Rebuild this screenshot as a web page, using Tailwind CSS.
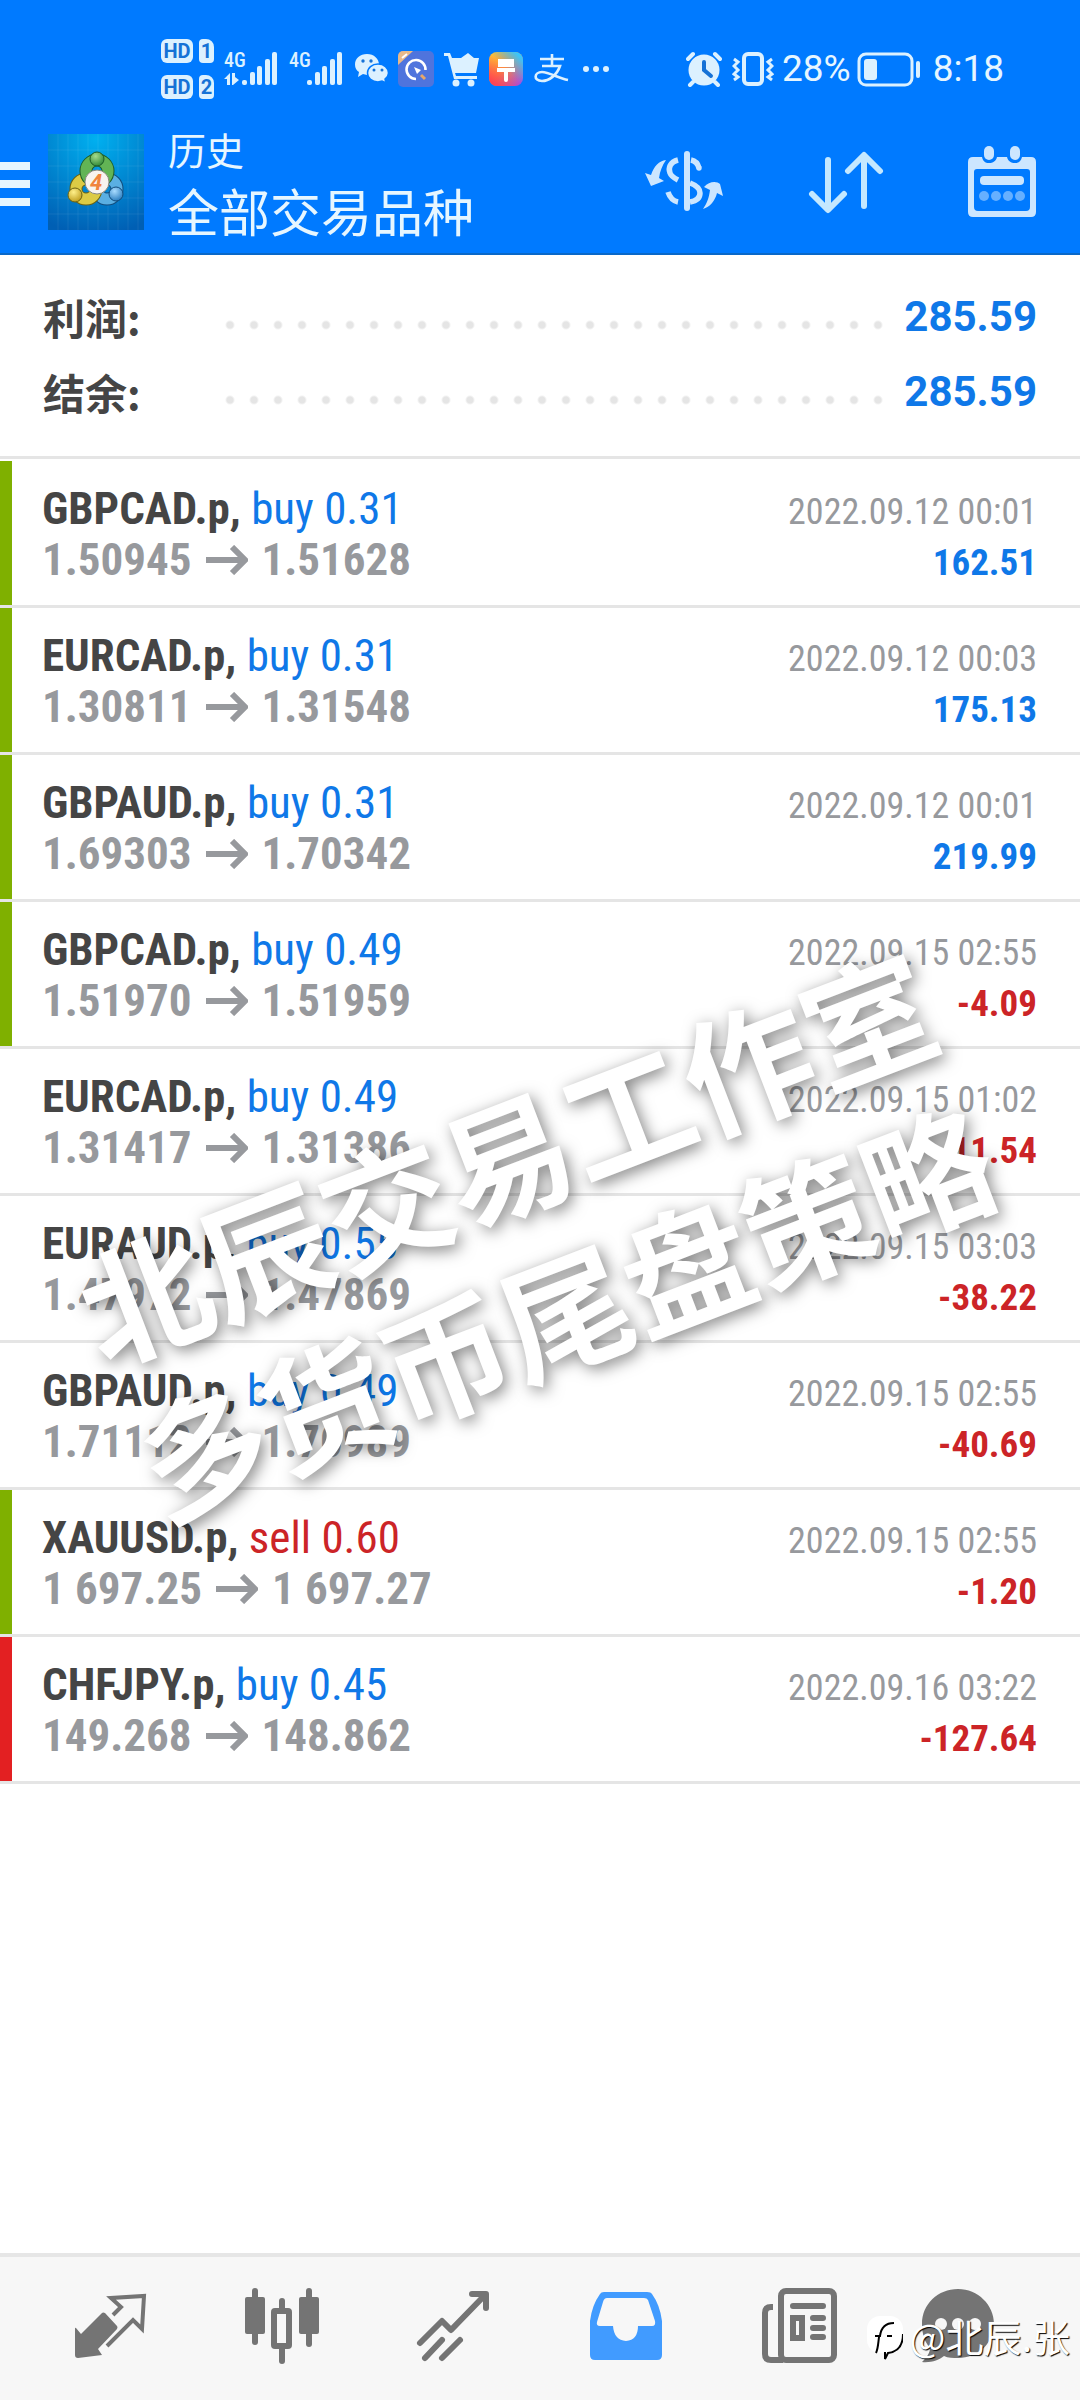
<!DOCTYPE html>
<html lang="zh-CN">
<head>
<meta charset="utf-8">
<meta name="viewport" content="width=device-width, initial-scale=1">
<title>历史</title>
<script src="https://cdn.jsdelivr.net/npm/@tailwindcss/browser@4"></script>
</head>
<body class="bg-white">
<div class="relative flex min-h-screen flex-col overflow-hidden font-['Roboto_Condensed','Roboto','Noto_Sans_CJK_SC',sans-serif] text-[#454545]">

  <header class="border-b-2 border-[#0a68c8] bg-[#007aff] text-[#e6f6ff]">
    <!-- Status bar -->
    <div class="flex h-[110px] items-center pt-[27px] pr-[76px] pl-[161px] font-['Roboto','Noto_Sans_CJK_SC',sans-serif]">
      <div class="flex flex-col gap-3">
        <div class="flex items-center gap-1.5 text-xl leading-6 font-bold text-[#1672d6]">
          <span class="w-8 rounded-md bg-[#dcf1ff] text-center">HD</span>
          <span class="w-[15px] rounded-sm rounded-tr-lg bg-[#dcf1ff] text-center">1</span>
        </div>
        <div class="flex items-center gap-1.5 text-xl leading-6 font-bold text-[#1672d6]">
          <span class="w-8 rounded-md bg-[#dcf1ff] text-center">HD</span>
          <span class="w-[15px] rounded-sm rounded-tr-lg bg-[#dcf1ff] text-center">2</span>
        </div>
      </div>
      <svg class="ml-2.5 h-9 w-[54px]" viewBox="0 0 54 36" fill="#dcf1ff" role="img" aria-label="4G">
        <text x="0" y="16" font-family="Roboto Condensed" font-weight="500" font-size="20">4G</text>
        <path d="M0 28l6-6v12H3v-6zM8 22h3v4l4 3-6 5H8z"/>
        <rect x="18" y="29" width="5" height="5" rx="2"/><rect x="26" y="21" width="5" height="13" rx="2"/><rect x="33" y="15" width="5" height="19" rx="2"/><rect x="41" y="8" width="5" height="26" rx="2"/><rect x="48" y="1" width="5" height="33" rx="2"/>
      </svg>
      <svg class="ml-2.5 h-9 w-[56px]" viewBox="0 0 56 36" fill="#dcf1ff" role="img" aria-label="4G">
        <text x="1" y="16" font-family="Roboto Condensed" font-weight="500" font-size="20">4G</text>
        <rect x="19" y="29" width="5" height="5" rx="2"/><rect x="27" y="21" width="5" height="13" rx="2"/><rect x="34" y="15" width="5" height="19" rx="2"/><rect x="42" y="8" width="5" height="26" rx="2"/><rect x="49" y="1" width="5" height="33" rx="2"/>
      </svg>
      <svg class="ml-2.5 h-9 w-9" viewBox="0 0 36 36" role="img" aria-label="微信">
        <path d="M13 3C6 3 1 7.500 1 13.500c0 3.500 1.500 6 4 7.500l-1 5 5-3 4 1c7 0 12-5 12-10.500S20 3 13 3z" fill="#dcf1ff"/>
        <path d="M24 13c-6 0-10.500 4-10.500 9S18 31 24 31l4-1 4 2-1-4c2-1.500 3.500-3.500 3.500-6 0-5-4.500-9-10.500-9z" fill="#dcf1ff" stroke="#007aff" stroke-width="1.500"/>
        <circle cx="9" cy="10" r="1.700" fill="#1672d6"/><circle cx="17" cy="10" r="1.700" fill="#1672d6"/><circle cx="20" cy="19" r="1.500" fill="#1672d6"/><circle cx="28" cy="19" r="1.500" fill="#1672d6"/>
      </svg>
      <svg class="ml-2 h-9 w-9" viewBox="0 0 36 36" aria-hidden="true">
        <rect width="36" height="36" rx="5" fill="#4f74dd"/><path d="M0 14V5a5 5 0 015-5h10z" fill="#e7b98a"/><path d="M4 7l5-4" stroke="#fff" stroke-width="2"/>
        <path d="M18 28a9.500 9.500 0 119.500-9" fill="none" stroke="#fff" stroke-width="2.600"/><path d="M16 16l7 3-4 4z" fill="#fff"/><path d="M23 24l4 4" stroke="#e7a76a" stroke-width="3"/>
      </svg>
      <svg class="ml-2.5 h-9 w-9" viewBox="0 0 36 36" fill="#dcf1ff" aria-hidden="true">
        <path d="M0 2h6l2 5h27l-3 15H11l1 3h21v3H10L4 5H0zM17 7l7-5 6 5z"/><circle cx="12" cy="32" r="3.500"/><circle cx="27" cy="32" r="3.500"/>
      </svg>
      <svg class="ml-2 h-9 w-9" viewBox="0 0 36 36" aria-hidden="true">
        <defs>
          <linearGradient id="brushA" x1="0" y1="0" x2="1" y2="1"><stop offset="0" stop-color="#ffc934"/><stop offset=".45" stop-color="#ff8a3c"/><stop offset="1" stop-color="#9a45f5"/></linearGradient>
          <linearGradient id="brushB" x1="0" y1="1" x2="1" y2="0"><stop offset=".5" stop-color="#29c5ff" stop-opacity="0"/><stop offset=".9" stop-color="#35c8ff"/></linearGradient>
          <linearGradient id="brushC" x1="0" y1="1" x2="1" y2="0"><stop offset="0" stop-color="#ff3355"/><stop offset=".5" stop-color="#ff3355" stop-opacity="0"/></linearGradient>
        </defs>
        <rect x="1" y="1" width="34" height="34" rx="8" fill="url(#brushA)"/><rect x="1" y="1" width="34" height="34" rx="8" fill="url(#brushB)"/><rect x="1" y="1" width="34" height="34" rx="8" fill="url(#brushC)"/>
        <path d="M10 8h16v8H10zM9 17h18v4h-7v8a2 2 0 01-4 0v-8H9z" fill="#fff"/>
      </svg>
      <svg class="ml-2.5 h-9 w-9" viewBox="0 0 36 36" fill="none" stroke="#dcf1ff" stroke-width="2.600" aria-label="支付宝" role="img">
        <path d="M6 8h24M18 3v11M8 15h18c-3 9-11 15-18 15-9 0-8-9 0-9 7 0 16 6 26 8"/>
      </svg>
      <svg class="ml-3 h-9 w-7" viewBox="0 0 28 36" fill="#dcf1ff" aria-hidden="true"><circle cx="4" cy="18" r="3"/><circle cx="14" cy="18" r="3"/><circle cx="24" cy="18" r="3"/></svg>

      <div class="ml-auto flex items-center text-[37px] leading-9">
        <svg class="h-9 w-9" viewBox="0 0 36 36" aria-hidden="true">
          <circle cx="18" cy="19" r="15.500" fill="#dcf1ff"/><path d="M2 8l5-5M29 3l5 5M7 31l-3 3M29 31l3 3" stroke="#dcf1ff" stroke-width="4" stroke-linecap="round"/><path d="M18 11v8l7 6" fill="none" stroke="#1672d6" stroke-width="4" stroke-linecap="round"/>
        </svg>
        <svg class="ml-2.5 h-9 w-[42px]" viewBox="0 0 42 36" fill="none" stroke="#dcf1ff" aria-hidden="true">
          <rect x="12" y="3" width="18" height="30" rx="4" stroke-width="4"/><path d="M2 8l4 3-4 4 4 4-4 4 4 3-4 3M40 8l-4 3 4 4-4 4 4 4-4 3 4 3" stroke-width="3"/>
        </svg>
        <span class="ml-2">28%</span>
        <svg class="ml-1.5 h-9 w-16" viewBox="0 0 64 36" aria-hidden="true">
          <rect x="2" y="3" width="53" height="31" rx="7" fill="none" stroke="#dcf1ff" stroke-width="3"/><rect x="7" y="8" width="13" height="21" rx="3" fill="#dcf1ff"/><rect x="59" y="10" width="4" height="17" rx="2" fill="#dcf1ff"/>
        </svg>
        <span class="ml-3">8:18</span>
      </div>
    </div>

    <!-- Toolbar -->
    <div class="flex h-[143px] items-center pr-11">
      <button type="button" aria-label="菜单" class="flex w-[30px] flex-col gap-2.5 pt-1">
        <span class="h-2 bg-[#e6f6ff]"></span><span class="h-2 bg-[#e6f6ff]"></span><span class="h-2 bg-[#e6f6ff]"></span>
      </button>
      <svg class="ml-[18px] h-24 w-24" viewBox="0 0 96 96" role="img" aria-label="MetaTrader 4">
        <defs>
          <radialGradient id="logoBg" cx=".5" cy=".05" r="1"><stop offset="0" stop-color="#00b0f0"/><stop offset=".55" stop-color="#0084cf"/><stop offset="1" stop-color="#005fb4"/></radialGradient>
          <radialGradient id="green" cx=".4" cy=".3" r=".8"><stop offset="0" stop-color="#a5dc8c"/><stop offset="1" stop-color="#23802e"/></radialGradient>
          <radialGradient id="gold" cx=".4" cy=".3" r=".8"><stop offset="0" stop-color="#fff08a"/><stop offset="1" stop-color="#b89410"/></radialGradient>
          <radialGradient id="sky" cx=".4" cy=".3" r=".8"><stop offset="0" stop-color="#a9dcff"/><stop offset="1" stop-color="#1b72b8"/></radialGradient>
        </defs>
        <rect width="96" height="96" fill="url(#logoBg)"/>
        <path d="M10 0v96M20 0v96M30 0v96M40 0v96M50 0v96M60 0v96M70 0v96M80 0v96M90 0v96M0 16h96M0 32h96M0 48h96M0 64h96M0 80h96" stroke="#fff" stroke-opacity=".07"/>
        <circle cx="59" cy="55" r="10" fill="none" stroke="#124c7c" stroke-width="13"/><circle cx="59" cy="55" r="10" fill="none" stroke="#5aafe2" stroke-width="11"/>
        <circle cx="38" cy="55" r="10" fill="none" stroke="#6b6212" stroke-width="13"/><circle cx="38" cy="55" r="10" fill="none" stroke="#dccb45" stroke-width="11"/>
        <circle cx="49" cy="37" r="11" fill="none" stroke="#1d5c28" stroke-width="13"/><circle cx="49" cy="37" r="11" fill="none" stroke="#62b455" stroke-width="11"/>
        <circle cx="49" cy="25" r="7" fill="url(#green)" stroke="#1d5c28"/><circle cx="27" cy="61" r="7" fill="url(#gold)" stroke="#6b6212"/><circle cx="68" cy="60" r="7" fill="url(#sky)" stroke="#124c7c"/>
        <circle cx="49" cy="48" r="12" fill="#f8f4ef" stroke="#8a8a80"/>
        <text x="48" y="56" text-anchor="middle" font-family="Roboto" font-style="italic" font-weight="700" font-size="22" fill="#f0843c">4</text>
      </svg>
      <div class="ml-6 flex flex-col gap-1.5 font-['Noto_Sans_CJK_SC',sans-serif]">
        <span class="text-[38px] leading-[50px]">历史</span>
        <h1 class="text-[51px] leading-[60px]">全部交易品种</h1>
      </div>
      <div class="ml-auto flex items-center gap-20">
        <button type="button" aria-label="币种" class="mr-1">
          <svg class="h-[72px] w-20" viewBox="0 0 80 72" fill="none" stroke="#cce6ff">
            <path d="M43 8v54" stroke-width="6" stroke-linecap="round"/>
            <path d="M47 14c5 1 7 4 8 8M34 14c-8 2-10 8-8 13 1 3 4 5 8 7M24 46c2 6 5 9 10 10M46 37c8 3 10 6 10 10 0 5-4 8-10 9" stroke-width="5.500"/><circle cx="55" cy="22" r="2.700" fill="#cce6ff" stroke="none"/>
            <path d="M22 14C15 15 10 20 7 29L1 27l6 13 13-5-5-3c1-7 3-12 7-18zM59 63c7-2 12-8 14-16l6 3-3-12c-3-3-11-3-16 3l6 3c-1 8-3 13-7 19z" fill="#cce6ff" stroke="none"/>
          </svg>
        </button>
        <button type="button" aria-label="排序" class="mr-1">
          <svg class="h-[72px] w-[76px]" viewBox="0 0 76 72" fill="none" stroke="#c4e8ff" stroke-width="6" stroke-linecap="round" stroke-linejoin="round">
            <path d="M20 14v48M4 48l16 16 16-16M56 60V10M40 25l16-16 16 16"/>
          </svg>
        </button>
        <button type="button" aria-label="日期">
          <svg class="h-[72px] w-[68px]" viewBox="0 0 68 72">
            <path fill-rule="evenodd" d="M5 11h9c1 4 3 6 7 6s7-2 8-6h10c1 4 4 6 8 6s6-2 7-6h9q5 0 5 5v50q0 5-5 5H5q-5 0-5-5V16q0-5 5-5zm4 12q-3 0-3 3v35q0 4 4 4h48q4 0 4-4V26q0-3-3-3z" fill="#cce6ff"/>
            <rect x="16" y="0" width="10" height="14" rx="5" fill="#cce6ff"/><rect x="42" y="0" width="10" height="14" rx="5" fill="#cce6ff"/>
            <rect x="12" y="30" width="44" height="9" rx="4" fill="#cce6ff"/>
            <g fill="#66b0ff"><circle cx="16" cy="50" r="5"/><circle cx="28" cy="50" r="5"/><circle cx="40" cy="50" r="5"/><circle cx="52" cy="50" r="5"/></g>
          </svg>
        </button>
      </div>
    </div>
  </header>

  <main>
    <!-- Totals -->
    <dl class="border-b-3 border-[#e5e5e5] px-[43px] pt-6 pb-[27px] font-['Roboto','Noto_Sans_CJK_SC',sans-serif]">
      <div class="flex h-[75px] items-center">
        <dt class="w-[175px] font-['Noto_Sans_CJK_SC',sans-serif] text-[42px] leading-[75px] font-bold">利润:</dt>
        <dd class="contents"><span class="mt-4 h-6 flex-1 bg-[radial-gradient(circle,#e5e5e5_3px,transparent_5px)] bg-[length:24px_24px]"></span><span class="w-[147px] text-right text-[42px] font-bold text-[#0f78e8]">285.59</span></dd>
      </div>
      <div class="flex h-[75px] items-center">
        <dt class="w-[175px] font-['Noto_Sans_CJK_SC',sans-serif] text-[42px] leading-[75px] font-bold">结余:</dt>
        <dd class="contents"><span class="mt-4 h-6 flex-1 bg-[radial-gradient(circle,#e5e5e5_3px,transparent_5px)] bg-[length:24px_24px]"></span><span class="w-[147px] text-right text-[42px] font-bold text-[#0f78e8]">285.59</span></dd>
      </div>
    </dl>

    <svg class="hidden"><symbol id="arrow" viewBox="0 0 42 30"><path d="M0 15h38M26 2l13 13-13 13" fill="none" stroke="#97999d" stroke-width="6"/></symbol></svg>

    <!-- Closed deals -->
    <ul class="pt-0.5">
      <li class="border-b-3 border-[#e5e5e5]"><div class="h-36 border-l-12 border-[#7fb000] pt-[22px] pr-[43px] pl-[30px]">
        <div class="flex h-[51px] items-baseline justify-between text-[45px] leading-[51px]"><p><b>GBPCAD.p,</b> <span class="text-[#0f78e8]">buy 0.31</span></p><time class="text-[36px] text-[#97999d]">2022.09.12 00:01</time></div>
        <div class="flex h-[51px] items-baseline justify-between text-[45px] leading-[51px] font-bold"><p class="flex items-baseline gap-3.5 text-[#97999d]">1.50945<svg class="h-[30px] w-[42px]" aria-label="→"><use href="#arrow"/></svg>1.51628</p><span class="text-[37px] text-[#0f78e8]">162.51</span></div>
      </div></li>
      <li class="border-b-3 border-[#e5e5e5]"><div class="h-36 border-l-12 border-[#7fb000] pt-[22px] pr-[43px] pl-[30px]">
        <div class="flex h-[51px] items-baseline justify-between text-[45px] leading-[51px]"><p><b>EURCAD.p,</b> <span class="text-[#0f78e8]">buy 0.31</span></p><time class="text-[36px] text-[#97999d]">2022.09.12 00:03</time></div>
        <div class="flex h-[51px] items-baseline justify-between text-[45px] leading-[51px] font-bold"><p class="flex items-baseline gap-3.5 text-[#97999d]">1.30811<svg class="h-[30px] w-[42px]" aria-label="→"><use href="#arrow"/></svg>1.31548</p><span class="text-[37px] text-[#0f78e8]">175.13</span></div>
      </div></li>
      <li class="border-b-3 border-[#e5e5e5]"><div class="h-36 border-l-12 border-[#7fb000] pt-[22px] pr-[43px] pl-[30px]">
        <div class="flex h-[51px] items-baseline justify-between text-[45px] leading-[51px]"><p><b>GBPAUD.p,</b> <span class="text-[#0f78e8]">buy 0.31</span></p><time class="text-[36px] text-[#97999d]">2022.09.12 00:01</time></div>
        <div class="flex h-[51px] items-baseline justify-between text-[45px] leading-[51px] font-bold"><p class="flex items-baseline gap-3.5 text-[#97999d]">1.69303<svg class="h-[30px] w-[42px]" aria-label="→"><use href="#arrow"/></svg>1.70342</p><span class="text-[37px] text-[#0f78e8]">219.99</span></div>
      </div></li>
      <li class="border-b-3 border-[#e5e5e5]"><div class="h-36 border-l-12 border-[#7fb000] pt-[22px] pr-[43px] pl-[30px]">
        <div class="flex h-[51px] items-baseline justify-between text-[45px] leading-[51px]"><p><b>GBPCAD.p,</b> <span class="text-[#0f78e8]">buy 0.49</span></p><time class="text-[36px] text-[#97999d]">2022.09.15 02:55</time></div>
        <div class="flex h-[51px] items-baseline justify-between text-[45px] leading-[51px] font-bold"><p class="flex items-baseline gap-3.5 text-[#97999d]">1.51970<svg class="h-[30px] w-[42px]" aria-label="→"><use href="#arrow"/></svg>1.51959</p><span class="text-[37px] text-[#cc2427]">-4.09</span></div>
      </div></li>
      <li class="border-b-3 border-[#e5e5e5]"><div class="h-36 border-l-12 border-transparent pt-[22px] pr-[43px] pl-[30px]">
        <div class="flex h-[51px] items-baseline justify-between text-[45px] leading-[51px]"><p><b>EURCAD.p,</b> <span class="text-[#0f78e8]">buy 0.49</span></p><time class="text-[36px] text-[#97999d]">2022.09.15 01:02</time></div>
        <div class="flex h-[51px] items-baseline justify-between text-[45px] leading-[51px] font-bold"><p class="flex items-baseline gap-3.5 text-[#97999d]">1.31417<svg class="h-[30px] w-[42px]" aria-label="→"><use href="#arrow"/></svg>1.31386</p><span class="text-[37px] text-[#cc2427]">-11.54</span></div>
      </div></li>
      <li class="border-b-3 border-[#e5e5e5]"><div class="h-36 border-l-12 border-transparent pt-[22px] pr-[43px] pl-[30px]">
        <div class="flex h-[51px] items-baseline justify-between text-[45px] leading-[51px]"><p><b>EURAUD.p,</b> <span class="text-[#0f78e8]">buy 0.55</span></p><time class="text-[36px] text-[#97999d]">2022.09.15 03:03</time></div>
        <div class="flex h-[51px] items-baseline justify-between text-[45px] leading-[51px] font-bold"><p class="flex items-baseline gap-3.5 text-[#97999d]">1.47972<svg class="h-[30px] w-[42px]" aria-label="→"><use href="#arrow"/></svg>1.47869</p><span class="text-[37px] text-[#cc2427]">-38.22</span></div>
      </div></li>
      <li class="border-b-3 border-[#e5e5e5]"><div class="h-36 border-l-12 border-transparent pt-[22px] pr-[43px] pl-[30px]">
        <div class="flex h-[51px] items-baseline justify-between text-[45px] leading-[51px]"><p><b>GBPAUD.p,</b> <span class="text-[#0f78e8]">buy 0.49</span></p><time class="text-[36px] text-[#97999d]">2022.09.15 02:55</time></div>
        <div class="flex h-[51px] items-baseline justify-between text-[45px] leading-[51px] font-bold"><p class="flex items-baseline gap-3.5 text-[#97999d]">1.71112<svg class="h-[30px] w-[42px]" aria-label="→"><use href="#arrow"/></svg>1.70989</p><span class="text-[37px] text-[#cc2427]">-40.69</span></div>
      </div></li>
      <li class="border-b-3 border-[#e5e5e5]"><div class="h-36 border-l-12 border-[#7fb000] pt-[22px] pr-[43px] pl-[30px]">
        <div class="flex h-[51px] items-baseline justify-between text-[45px] leading-[51px]"><p><b>XAUUSD.p,</b> <span class="text-[#cc2427]">sell 0.60</span></p><time class="text-[36px] text-[#97999d]">2022.09.15 02:55</time></div>
        <div class="flex h-[51px] items-baseline justify-between text-[45px] leading-[51px] font-bold"><p class="flex items-baseline gap-3.5 text-[#97999d]">1 697.25<svg class="h-[30px] w-[42px]" aria-label="→"><use href="#arrow"/></svg>1 697.27</p><span class="text-[37px] text-[#cc2427]">-1.20</span></div>
      </div></li>
      <li class="border-b-3 border-[#e5e5e5]"><div class="h-36 border-l-12 border-[#e32022] pt-[22px] pr-[43px] pl-[30px]">
        <div class="flex h-[51px] items-baseline justify-between text-[45px] leading-[51px]"><p><b>CHFJPY.p,</b> <span class="text-[#0f78e8]">buy 0.45</span></p><time class="text-[36px] text-[#97999d]">2022.09.16 03:22</time></div>
        <div class="flex h-[51px] items-baseline justify-between text-[45px] leading-[51px] font-bold"><p class="flex items-baseline gap-3.5 text-[#97999d]">149.268<svg class="h-[30px] w-[42px]" aria-label="→"><use href="#arrow"/></svg>148.862</p><span class="text-[37px] text-[#cc2427]">-127.64</span></div>
      </div></li>
    </ul>
  </main>

  <!-- Bottom navigation -->
  <nav class="mt-auto grid h-[147px] grid-cols-6 items-center justify-items-center border-t-4 border-[#e6e6e6] bg-[#f7f7f7] px-6 pb-1.5 text-[#747474]">
    <a href="#quotes" aria-label="行情"><svg class="h-20 w-20" viewBox="0 0 80 80">
      <path d="M34 22q-2-1-3 0L10 43l-5-6q-1-1-1 1v26q0 3 3 3l24-3-4-6 19-20q1-2 0-3z" fill="currentColor" transform="translate(1 5)"/>
      <path d="M43 29l8-8-10-9 33-2-2 33-9-9-26 26" fill="none" stroke="currentColor" stroke-width="4"/>
    </svg></a>
    <a href="#charts" aria-label="图表"><svg class="h-20 w-20" viewBox="0 0 80 80" fill="currentColor">
      <rect x="3" y="11" width="20" height="37" rx="2"/><rect x="10" y="2" width="6" height="57" rx="3"/><rect x="57" y="11" width="20" height="37" rx="2"/><rect x="64" y="2" width="6" height="59" rx="3"/>
      <rect x="37" y="12" width="6" height="14" rx="3"/><rect x="37" y="60" width="6" height="18" rx="3"/><rect x="32" y="25" width="15" height="35" rx="1" fill="none" stroke="currentColor" stroke-width="6"/>
    </svg></a>
    <a href="#trade" aria-label="交易"><svg class="h-20 w-20" viewBox="0 0 80 80" fill="none" stroke="currentColor" stroke-width="6" stroke-linecap="round" stroke-linejoin="round">
      <path d="M6 57l22-22 9 9L71 9M58 8h14v14M11 72l17-18M28 72l18-18"/>
    </svg></a>
    <a href="#history" aria-label="历史" aria-current="page"><svg class="h-20 w-20" viewBox="0 0 80 80">
      <path fill-rule="evenodd" d="M18 6q-3 0-4 2Q6 19 4 35v34q0 5 5 5h62q5 0 5-5V35Q74 19 66 8q-1-2-5-2zm3 6h37q3 0 4 2l7 21q1 5-3 5H52q0 14-12 15-12-1-13-15H14q-4 0-3-4l6-20q1-4 4-4z" fill="#419bff"/>
    </svg></a>
    <a href="#news" aria-label="新闻"><svg class="h-20 w-20" viewBox="0 0 80 80" fill="none" stroke="currentColor" stroke-width="6">
      <rect x="23" y="5" width="53" height="69" rx="5"/><path d="M15 21H13q-6 0-6 6v41q0 6 6 6h12"/><path d="M35 20h30M55 32h10M55 42h10M55 51h10" stroke-linecap="round"/><rect x="35" y="32" width="9" height="20"/>
    </svg></a>
    <a href="#messages" aria-label="信息" class="mr-6"><svg class="h-20 w-20" viewBox="0 0 80 80" fill="currentColor">
      <path d="M40 3C20 3 4 18 4 38c0 11 3 18 8 24 0 5-3 9-8 14 9 1 17-2 22-6 4 2 9 2 14 2 20 0 36-15 36-34S60 3 40 3z"/><g fill="#f7f7f7"><circle cx="23" cy="38" r="6"/><circle cx="40" cy="38" r="6"/><circle cx="57" cy="38" r="6"/></g>
    </svg></a>
  </nav>

  <!-- Studio watermark -->
  <p class="pointer-events-none absolute inset-x-0 top-[1065px] mr-3 flex -rotate-21 flex-col items-center font-['Noto_Sans_CJK_SC',sans-serif] text-[129px] leading-[165px] font-bold whitespace-nowrap text-white [text-shadow:2px_5px_16px_#00000080]"><span>北辰交易工作室</span><span>多货币尾盘策略</span></p>

  <!-- Author tag -->
  <p class="pointer-events-none absolute right-2.5 bottom-9 flex items-center gap-1.5 font-['Noto_Sans_CJK_SC',sans-serif] text-[38px] leading-[56px] text-white [text-shadow:1px_1px_1px_#000]">
    <svg class="mt-1 h-11 w-9" viewBox="0 0 36 44" aria-hidden="true"><rect width="36" height="37" rx="13" fill="#fff"/><path d="M17 36l4 1-3 7z" fill="#fff"/><path d="M8 20h5c1-8 5-13 14-13M20 20h5M12 21c-1 8-1 12-3 16M36 18c0 12-6 18-15 19l-3 6v-7" fill="none" stroke="#000" stroke-width="2"/></svg>
    <span>@北辰.张</span>
  </p>
</div>
</body>
</html>
